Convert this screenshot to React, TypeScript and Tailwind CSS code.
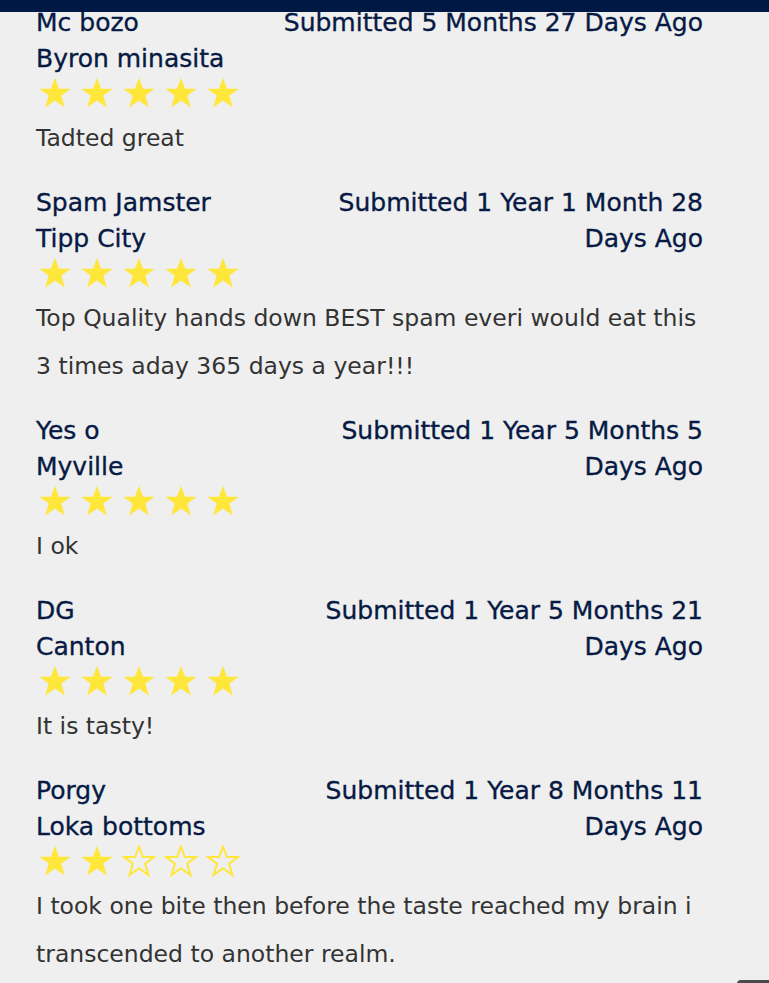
interface Review {
  name: string
  city: string
  submitted: string
  rating: number
  text: string
}

const reviews: Review[] = [
  { name: "Mc bozo", city: "Byron minasita", submitted: "Submitted 5 Months 27 Days Ago", rating: 5, text: "Tadted great" },
  {
    name: "Spam Jamster",
    city: "Tipp City",
    submitted: "Submitted 1 Year 1 Month 28 Days Ago",
    rating: 5,
    text: "Top Quality hands down BEST spam everi would eat this 3 times aday 365 days a year!!!",
  },
  { name: "Yes o", city: "Myville", submitted: "Submitted 1 Year 5 Months 5 Days Ago", rating: 5, text: "I ok" },
  { name: "DG", city: "Canton", submitted: "Submitted 1 Year 5 Months 21 Days Ago", rating: 5, text: "It is tasty!" },
  {
    name: "Porgy",
    city: "Loka bottoms",
    submitted: "Submitted 1 Year 8 Months 11 Days Ago",
    rating: 2,
    text: "I took one bite then before the taste reached my brain i transcended to another realm.",
  },
]

function Star({ filled }: { filled: boolean }) {
  return (
    <svg width="34" height="32" viewBox="0 0 34 32">
      <polygon
        points="17,1.5 20.9,12 32,12 23.1,18.6 26.4,30 17,23.2 7.6,30 10.9,18.6 2,12 13.1,12"
        fill={filled ? "#ffe63b" : "none"}
        stroke="#ffe63b"
        strokeWidth={filled ? 0.5 : 2}
        strokeLinejoin="miter"
      />
    </svg>
  )
}

export default function App() {
  return (
    <div className="min-h-screen bg-[#efefef] font-['DejaVu_Sans',sans-serif]">
      <div className="fixed top-0 left-0 right-0 h-[12px] bg-[#001844] z-10" />
      <div className="pl-[36px] pr-[66px] pt-[5px]">
        {reviews.map((r, i) => (
          <div key={i} className="mb-[23px]">
            <div className="flex justify-between text-[25px] leading-[36px] text-[#071a44] [-webkit-text-stroke:0.35px_#071a44]">
              <div>
                <p>{r.name}</p>
                <p>{r.city}</p>
              </div>
              <p className="w-[425px] text-right">{r.submitted}</p>
            </div>
            <div className="flex gap-[8px] h-[32px] items-center ml-[2px]">
              {[0, 1, 2, 3, 4].map((s) => (
                <Star key={s} filled={s < r.rating} />
              ))}
            </div>
            <p className="mt-[5px] text-[23.5px] leading-[48px] text-[#333333]">{r.text}</p>
          </div>
        ))}
      </div>
      <div className="fixed left-[737px] top-[980px] w-[40px] h-[40px] rounded-[4px] bg-[#4a4a4a]" />
    </div>
  )
}
